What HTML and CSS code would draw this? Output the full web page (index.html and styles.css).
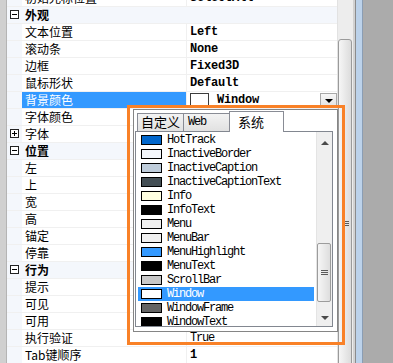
FILE: index.html
```html
<!DOCTYPE html>
<html lang="zh-CN">
<head>
    <meta charset="UTF-8">
    <meta name="viewport" content="width=device-width, initial-scale=1.0">
    <title>属性 - 背景颜色</title>
    <link rel="stylesheet" href="styles.css">
</head>
<body>
    <div class="screen">
        <div class="edge"></div>
        <div class="props">
            <div class="rows">
                <div class="row"><span class="gut"></span><span class="name">初始光标位置</span><span class="val b">SelectAll</span></div>
                <div class="row cat"><span class="gut"><svg class="tog" width="9" height="9" viewBox="0 0 9 9"><rect x="0.5" y="0.5" width="8" height="8" fill="#fff" stroke="#222"/><path d="M2 4.5h5" stroke="#000"/></svg></span><span class="name">外观</span></div>
                <div class="row"><span class="gut"></span><span class="name">文本位置</span><span class="val b">Left</span></div>
                <div class="row"><span class="gut"></span><span class="name">滚动条</span><span class="val b">None</span></div>
                <div class="row"><span class="gut"></span><span class="name">边框</span><span class="val b">Fixed3D</span></div>
                <div class="row"><span class="gut"></span><span class="name">鼠标形状</span><span class="val b">Default</span></div>
                <div class="row sel"><span class="gut"></span><span class="name">背景颜色</span><span class="val b"><i class="chip"></i>Window<i class="drop"></i></span></div>
                <div class="row"><span class="gut"></span><span class="name">字体颜色</span><span class="val"></span></div>
                <div class="row"><span class="gut"><svg class="tog" width="9" height="9" viewBox="0 0 9 9"><rect x="0.5" y="0.5" width="8" height="8" fill="#fff" stroke="#222"/><path d="M2 4.5h5M4.5 2v5" stroke="#000"/></svg></span><span class="name">字体</span><span class="val"></span></div>
                <div class="row cat"><span class="gut"><svg class="tog" width="9" height="9" viewBox="0 0 9 9"><rect x="0.5" y="0.5" width="8" height="8" fill="#fff" stroke="#222"/><path d="M2 4.5h5" stroke="#000"/></svg></span><span class="name">位置</span></div>
                <div class="row"><span class="gut"></span><span class="name">左</span><span class="val"></span></div>
                <div class="row"><span class="gut"></span><span class="name">上</span><span class="val"></span></div>
                <div class="row"><span class="gut"></span><span class="name">宽</span><span class="val"></span></div>
                <div class="row"><span class="gut"></span><span class="name">高</span><span class="val"></span></div>
                <div class="row"><span class="gut"></span><span class="name">锚定</span><span class="val"></span></div>
                <div class="row"><span class="gut"></span><span class="name">停靠</span><span class="val"></span></div>
                <div class="row cat"><span class="gut"><svg class="tog" width="9" height="9" viewBox="0 0 9 9"><rect x="0.5" y="0.5" width="8" height="8" fill="#fff" stroke="#222"/><path d="M2 4.5h5" stroke="#000"/></svg></span><span class="name">行为</span></div>
                <div class="row"><span class="gut"></span><span class="name">提示</span><span class="val"></span></div>
                <div class="row"><span class="gut"></span><span class="name">可见</span><span class="val"></span></div>
                <div class="row"><span class="gut"></span><span class="name">可用</span><span class="val"></span></div>
                <div class="row"><span class="gut"></span><span class="name">执行验证</span><span class="val">True</span></div>
                <div class="row"><span class="gut"></span><span class="name">Tab键顺序</span><span class="val b">1</span></div>
            </div>
            <div class="vscroll">
                <div class="pthumb"><i class="grip"></i></div>
            </div>
        </div>
        <div class="split"></div>
        <div class="rest"></div>

        <!-- colour picker drop-down -->
        <div class="popup">
            <div class="tabs">
                <span class="tab">自定义</span>
                <span class="tab mono">Web</span>
                <span class="tab on">系统</span>
            </div>
            <div class="list">
                <div class="items">
                    <div class="item"><i class="sw" style="background:#0066cc"></i>HotTrack</div>
                    <div class="item"><i class="sw" style="background:#f4f7fc"></i>InactiveBorder</div>
                    <div class="item"><i class="sw" style="background:#bfcddb"></i>InactiveCaption</div>
                    <div class="item"><i class="sw" style="background:#434e54"></i>InactiveCaptionText</div>
                    <div class="item"><i class="sw" style="background:#ffffe1"></i>Info</div>
                    <div class="item"><i class="sw" style="background:#000000"></i>InfoText</div>
                    <div class="item"><i class="sw" style="background:#f0f0f0"></i>Menu</div>
                    <div class="item"><i class="sw" style="background:#f0f0f0"></i>MenuBar</div>
                    <div class="item"><i class="sw" style="background:#3399ff"></i>MenuHighlight</div>
                    <div class="item"><i class="sw" style="background:#000000"></i>MenuText</div>
                    <div class="item"><i class="sw" style="background:#c8c8c8"></i>ScrollBar</div>
                    <div class="item on"><i class="sw" style="background:#ffffff"></i>Window</div>
                    <div class="item"><i class="sw" style="background:#646464"></i>WindowFrame</div>
                    <div class="item"><i class="sw" style="background:#000000"></i>WindowText</div>
                </div>
                <div class="lscroll">
                    <div class="arr top"><i class="up"></i></div>
                    <div class="track"><div class="lthumb"><i class="grip"></i></div></div>
                    <div class="arr"><i class="down"></i></div>
                </div>
            </div>
        </div>

        <div class="note"></div>
    </div>
</body>
</html>
```

FILE: styles.css
```css
* {
    box-sizing: border-box;
}
body {
    margin: 0;
    background: #ababab;
    font-family: "Noto Sans CJK SC", sans-serif;
    font-size: 12px;
    color: #000;
    overflow: hidden;
}
.screen {
    position: relative;
    display: flex;
    height: 363px;
}
.edge {
    width: 7px;
    background: #d0d0d0;
    border-right: 1px solid #b4b4b4;
}

/* property grid */
.props {
    width: 346px;
    display: flex;
    background: #fff;
    overflow: hidden;
}
.rows {
    width: 330px;
    margin-top: -10px;
}
.row {
    display: grid;
    grid-template-columns: 15px 165px 150px;
    height: 17px;
    line-height: 16px;
    border-bottom: 1px solid #f0f0f0;
}
.gut {
    background: #f4f7fc;
    padding: 3px 0 0 3px;
}
.tog {
    display: block;
}
.name {
    padding-left: 3px;
    border-right: 1px solid #f0f0f0;
    white-space: nowrap;
    overflow: hidden;
}
.val {
    display: flex;
    align-items: center;
    padding-left: 3px;
    font-family: "Liberation Mono", monospace;
    letter-spacing: -1.2px;
    white-space: nowrap;
}
.val.b {
    font-weight: bold;
    letter-spacing: -0.2px;
}
.cat {
    background: #f4f7fc;
}
.cat .name {
    grid-column: 2 / 4;
    border-right: 0;
    font-weight: bold;
}
.sel .name {
    background: #3399ff;
    color: #fff;
}
.chip {
    width: 19px;
    height: 14px;
    border: 1px solid #3c3c3c;
    background: #fff;
    margin-right: 8px;
}
.drop {
    margin-left: auto;
    width: 17px;
    height: 15px;
    border: 1px solid #a8a8a8;
    background: linear-gradient(#f6f6f6, #e2e2e2);
    display: flex;
    align-items: center;
    justify-content: center;
}
.drop::before {
    content: "";
    border-left: 4px solid transparent;
    border-right: 4px solid transparent;
    border-top: 4px solid #000;
    margin-top: 2px;
}

.vscroll {
    width: 16px;
    background: #ededed;
    border-left: 1px solid #e2e2e2;
    overflow: hidden;
}
.pthumb {
    margin: 39px 1px 0 0;
    height: 368px;
    border: 1px solid #9a9a9a;
    border-radius: 3px;
    background: linear-gradient(90deg, #f6f6f6, #dcdcdc);
    display: flex;
    align-items: center;
    justify-content: center;
}
.grip {
    width: 7px;
    height: 5px;
    background: repeating-linear-gradient(#5a5a5a 0 1px, transparent 1px 2px);
}
.split {
    width: 10px;
    background: linear-gradient(90deg, #d2d2d2 0 2px, #8c8c8c 2px 3px, #bcd2ea 3px 9px, #8a9db4 9px);
}
.rest {
    flex: 1;
    background: #ababab;
}

/* colour drop-down */
.popup {
    position: absolute;
    left: 133px;
    top: 109px;
    width: 205px;
    height: 223px;
    border: 1px solid #858585;
    background: #fff;
    padding: 0 4px 4px 1px;
    display: flex;
    flex-direction: column;
}
.tabs {
    display: flex;
    align-items: flex-end;
    height: 21px;
    padding-left: 2px;
}
.tab {
    width: 47px;
    height: 18px;
    margin-right: -1px;
    border: 1px solid #898c95;
    border-bottom: 0;
    background: linear-gradient(#f3f3f3, #e1e1e1);
    font-size: 13px;
    line-height: 16px;
    padding-left: 3px;
    white-space: nowrap;
    overflow: hidden;
}
.tab.mono {
    font-family: "Liberation Mono", monospace;
    font-size: 12px;
    letter-spacing: -1.2px;
    padding-left: 4px;
}
.tab.on {
    position: relative;
    width: 55px;
    height: 21px;
    margin-bottom: -1px;
    background: #fff;
    padding-left: 8px;
    line-height: 19px;
}
.list {
    flex: 1;
    display: flex;
    border: 1px solid #828790;
    overflow: hidden;
}
.items {
    flex: 1;
    padding: 1px 2px 0;
    overflow: hidden;
}
.item {
    display: flex;
    align-items: center;
    height: 14px;
    font-family: "Liberation Mono", monospace;
    letter-spacing: -1.2px;
    white-space: nowrap;
}
.item.on {
    background: #3399ff;
    color: #fff;
}
.sw {
    width: 21px;
    height: 10px;
    margin: 0 5px 0 3px;
    border: 1px solid #000;
}
.lscroll {
    width: 16px;
    display: flex;
    flex-direction: column;
    background: #efefef;
    border-left: 1px solid #e4e4e4;
}
.arr {
    height: 17px;
    display: flex;
    align-items: center;
    justify-content: center;
}
.arr.top {
    height: 22px;
}
.up {
    border-left: 4px solid transparent;
    border-right: 4px solid transparent;
    border-bottom: 4px solid #4a4a4a;
}
.down {
    border-left: 4px solid transparent;
    border-right: 4px solid transparent;
    border-top: 4px solid #4a4a4a;
}
.track {
    flex: 1;
}
.lthumb {
    margin: 89px 1px 0 0;
    height: 59px;
    border: 1px solid #9c9c9c;
    border-radius: 2px;
    background: linear-gradient(90deg, #f6f6f6, #dedede);
    display: flex;
    align-items: center;
    justify-content: center;
}

/* orange highlight mark */
.note {
    position: absolute;
    left: 127px;
    top: 105px;
    width: 218px;
    height: 240px;
    border: 3px solid #f98127;
    pointer-events: none;
}
```
